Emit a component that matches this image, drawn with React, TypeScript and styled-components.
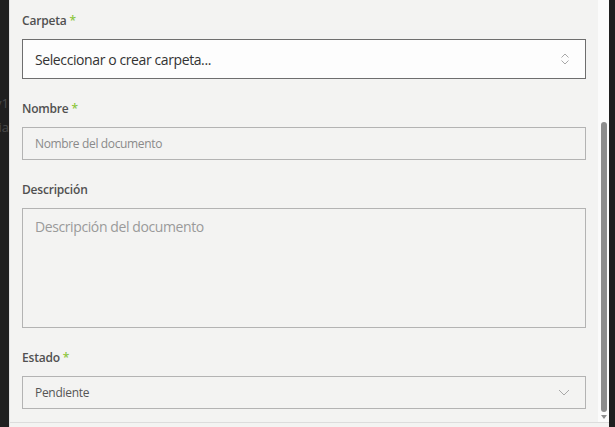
import styled, { createGlobalStyle } from "styled-components";

const GlobalStyle = createGlobalStyle`
  html, body {
    margin: 0;
    padding: 0;
    background: #1f1f1f;
  }
  * {
    box-sizing: border-box;
  }
`;

const Page = styled.div`
  display: flex;
  height: 427px;
  width: 615px;
  overflow: hidden;
  background: #1f1f1f;
  font-family: "Open Sans", "Noto Sans", sans-serif;
`;

const Backdrop = styled.div`
  width: 9px;
  flex-shrink: 0;
  overflow: hidden;
  display: flex;
  flex-direction: column;
  align-items: flex-end;
  padding-top: 94px;
  gap: 6px;
  color: #4a4a4a;
  font-size: 13px;
  line-height: 18px;
  white-space: nowrap;
`;

const Panel = styled.div`
  flex: 1;
  display: flex;
  flex-direction: column;
  background: #f3f3f2;
  border-left: 1px solid #e2e2e2;
`;

const Body = styled.div`
  flex: 1;
  display: flex;
  min-height: 0;
`;

const Footer = styled.div`
  height: 5px;
  border-top: 1px solid #dcdcdc;
  background: #f3f3f2;
`;

const Form = styled.form`
  flex: 1;
  padding: 10px 12px 0 12px;
  display: flex;
  flex-direction: column;
  gap: 19px;
`;

const Field = styled.div`
  display: flex;
  flex-direction: column;
  gap: 9px;
`;

const Label = styled.label`
  height: 20px;
  line-height: 21px;
  font-size: 12px;
  font-weight: 600;
  letter-spacing: -0.2px;
  color: #505050;
`;

const Required = styled.span`
  color: #8cc63f;
  margin-left: 3px;
`;

const SelectBox = styled.div<{ $strong?: boolean; $height: number }>`
  height: ${(p) => p.$height}px;
  display: flex;
  align-items: center;
  justify-content: space-between;
  padding: 0 15px 0 12px;
  border: 1px solid ${(p) => (p.$strong ? "#6e6e6e" : "#b3b3b3")};
  background: ${(p) => (p.$strong ? "#fdfdfd" : "#f3f3f2")};
  color: ${(p) => (p.$strong ? "#333333" : "#555555")};
  font-size: ${(p) => (p.$strong ? 14 : 12)}px;
  letter-spacing: ${(p) => (p.$strong ? -0.4 : -0.3)}px;
`;

const TextInput = styled.input`
  height: 33px;
  padding: 0 12px;
  border: 1px solid #b3b3b3;
  background: #f3f3f2;
  font-family: inherit;
  font-size: 12px;
  letter-spacing: -0.35px;
  color: #333;
  outline: none;
  &::placeholder {
    color: #8a8a8a;
  }
`;

const TextArea = styled.textarea`
  height: 120px;
  padding: 8px 12px;
  border: 1px solid #b3b3b3;
  background: #f3f3f2;
  font-family: inherit;
  font-size: 14px;
  letter-spacing: -0.4px;
  line-height: 20px;
  color: #333;
  resize: none;
  outline: none;
  &::placeholder {
    color: #9a9a9a;
  }
`;

const Scrollbar = styled.div`
  width: 11px;
  flex-shrink: 0;
  background: #fbfbfb;
  display: flex;
  flex-direction: column;
  align-items: center;
  padding: 122px 0 3px;
  gap: 3px;
`;

const Thumb = styled.div`
  flex: 1;
  width: 6px;
  border-radius: 3px;
  background: #8c8c8c;
`;

const Arrow = styled.div`
  width: 0;
  height: 0;
  border-left: 3px solid transparent;
  border-right: 3px solid transparent;
  border-top: 4px solid #8c8c8c;
`;

const RightEdge = styled.div`
  width: 6px;
  flex-shrink: 0;
  background: #1f1f1f;
`;

const UpDown = () => (
  <svg width="10" height="12" viewBox="0 0 10 12" fill="none" stroke="#a8a8a8" strokeWidth="1">
    <path d="M1.5 4.5 L5 1 L8.5 4.5" />
    <path d="M1.5 7.5 L5 11 L8.5 7.5" />
  </svg>
);

const ChevronDown = () => (
  <svg width="12" height="7" viewBox="0 0 12 7" fill="none" stroke="#a8a8a8" strokeWidth="1">
    <path d="M1 1 L6 6 L11 1" />
  </svg>
);

export default function App() {
  return (
    <>
      <GlobalStyle />
      <Page>
        <Backdrop>
          <span>v1</span>
          <span>ia</span>
        </Backdrop>
        <Panel>
          <Body>
            <Form onSubmit={(e) => e.preventDefault()}>
              <Field>
                <Label>
                  Carpeta<Required>*</Required>
                </Label>
                <SelectBox $strong $height={40}>
                  <span>Seleccionar o crear carpeta...</span>
                  <UpDown />
                </SelectBox>
              </Field>
              <Field>
                <Label>
                  Nombre<Required>*</Required>
                </Label>
                <TextInput placeholder="Nombre del documento" />
              </Field>
              <Field>
                <Label>Descripción</Label>
                <TextArea placeholder="Descripción del documento" />
              </Field>
              <Field>
                <Label>
                  Estado<Required>*</Required>
                </Label>
                <SelectBox $height={33}>
                  <span>Pendiente</span>
                  <ChevronDown />
                </SelectBox>
              </Field>
            </Form>
            <Scrollbar>
              <Thumb />
              <Arrow />
            </Scrollbar>
          </Body>
          <Footer />
        </Panel>
        <RightEdge />
      </Page>
    </>
  );
}
